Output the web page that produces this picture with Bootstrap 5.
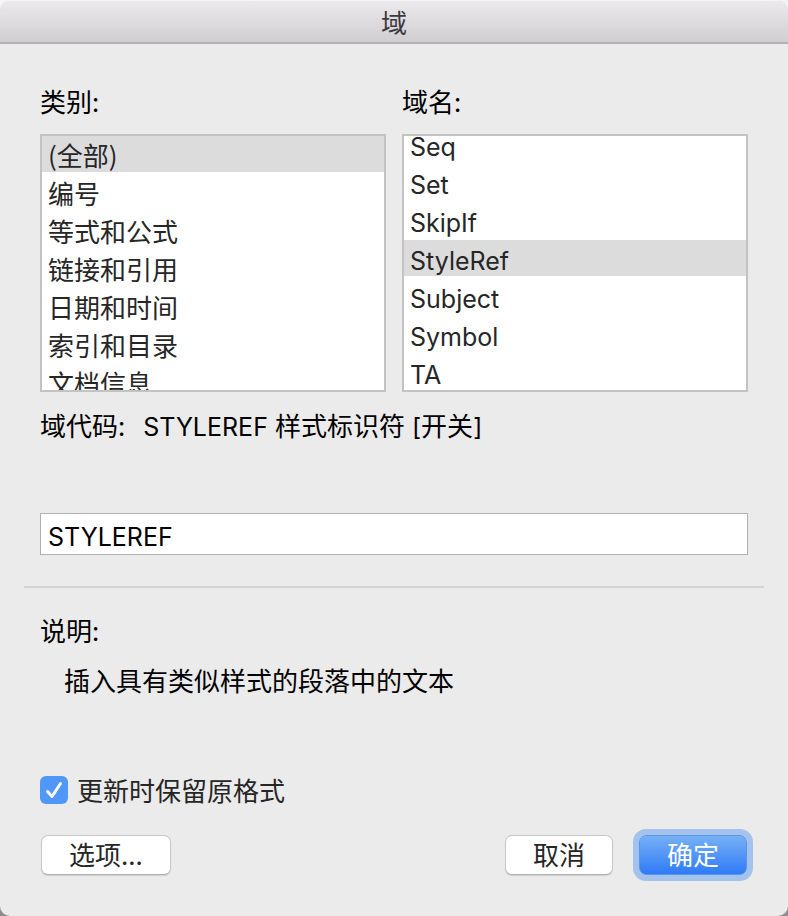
<!DOCTYPE html>
<html lang="zh-CN">
<head>
<meta charset="utf-8">
<meta name="viewport" content="width=device-width, initial-scale=1">
<title>域</title>
<link rel="stylesheet" href="https://cdn.jsdelivr.net/npm/bootstrap@5.3.0/dist/css/bootstrap.min.css">
<style>
  body {
    background: linear-gradient(#f6f6f6, #8c8c8c);
    color: #000;
    font: 26px/36px "Noto Sans CJK SC", sans-serif;
  }
  .dialog { background: #ebebeb; border-radius: 10px; overflow: hidden; }
  .title-bar {
    height: 44px;
    background: linear-gradient(#ebe9ec, #d1ced2);
    border-top: 1px solid #f6f5f6;
    border-bottom: 2px solid #b3b1b3;
    color: #3c3a3d;
  }
  .title-bar h1 { font-size: 26px; line-height: 36px; font-weight: 400; }
  .dialog-body { padding: 39px 40px 0; }
  .latin { font-family: Inter, "Noto Sans CJK SC", sans-serif; font-size: 25px; }
  .lists { gap: 16px; }
  .pick-label { margin-bottom: 15px; }
  .pick-list {
    display: block;
    height: 258px;
    padding: 0;
    border: 2px solid #c3c3c3;
    border-radius: 0;
    background: #fff;
    color: #262626;
    overflow-y: scroll;
    scrollbar-width: none;
    outline: 0;
  }
  .pick-list::-webkit-scrollbar { display: none; }
  .pick-list option {
    height: 36px;
    min-height: 36px;
    margin-bottom: 2px;
    padding: 0 6px;
    line-height: 36px;
    color: #262626;
  }
  .pick-list.latin option { padding-top: 6px; }
  .pick-list option:checked { background: #dcdcdc linear-gradient(#dcdcdc, #dcdcdc); color: #262626; }
  .code-row { margin-top: 15px; gap: 18px; }
  .code-input {
    height: 42px;
    margin-top: 68px;
    padding: 5px 7px 0;
    border: 1px solid #b0b0b0;
    border-radius: 0;
    color: #000;
  }
  .rule { margin: 31px -16px 24px; border-top: 2px solid #d4d4d4; opacity: 1; }
  .description { margin: 14px 0 0; padding-left: 24px; }
  .keep { margin-top: 74px; gap: 9px; color: #262626; }
  .keep .form-check-input {
    width: 28px;
    height: 28px;
    margin: 0;
    border: 0;
    border-radius: 6px;
    background: #4f97f8 url("data:image/svg+xml,%3Csvg xmlns='http://www.w3.org/2000/svg' viewBox='0 0 28 28'%3E%3Cpath d='M7.5 15.5 12 20.5 20.5 7.5' fill='none' stroke='%23fff' stroke-width='3' stroke-linecap='round' stroke-linejoin='round'/%3E%3C/svg%3E") center / 28px no-repeat;
  }
  .actions { padding: 27px 1px 40px; gap: 26px; }
  .push {
    height: 40px;
    padding: 0 27px 2px;
    border: 1px solid #c8c8c8;
    border-bottom-color: #b0b0b0;
    border-radius: 7px;
    background: #fff;
    box-shadow: 0 1px 1px #0000001f;
    color: #262626;
    font-size: 26px;
    line-height: 36px;
  }
  .push-default {
    border-color: #5c96e2;
    background: linear-gradient(#77b0f5, #2f7bf8);
    box-shadow: 0 0 0 6px #a3c3ee;
    color: #fff;
  }
</style>
</head>
<body>
<main class="dialog min-vh-100">
  <header class="title-bar d-flex align-items-center justify-content-center">
    <h1 class="m-0">域</h1>
  </header>
  <form class="dialog-body">
    <div class="lists d-flex">
      <div class="flex-fill w-50">
        <label class="pick-label d-block" for="category">类别:</label>
        <select class="pick-list w-100" id="category" size="7">
          <option selected>(全部)</option>
          <option>编号</option>
          <option>等式和公式</option>
          <option>链接和引用</option>
          <option>日期和时间</option>
          <option>索引和目录</option>
          <option>文档信息</option>
        </select>
      </div>
      <div class="flex-fill w-50">
        <label class="pick-label d-block" for="field">域名:</label>
        <select class="pick-list latin w-100" id="field" size="7">
          <option>Seq</option>
          <option>Set</option>
          <option>SkipIf</option>
          <option selected>StyleRef</option>
          <option>Subject</option>
          <option>Symbol</option>
          <option>TA</option>
        </select>
      </div>
    </div>
    <div class="code-row d-flex">
      <label for="code">域代码:</label>
      <span><span class="latin">STYLEREF </span>样式标识符<span class="latin"> [</span>开关<span class="latin">]</span></span>
    </div>
    <input class="code-input latin form-control shadow-none" id="code" type="text" value="STYLEREF">
    <hr class="rule">
    <div>说明:</div>
    <p class="description">插入具有类似样式的段落中的文本</p>
    <div class="keep d-flex align-items-center">
      <input class="form-check-input flex-shrink-0" type="checkbox" id="keep" checked>
      <label for="keep">更新时保留原格式</label>
    </div>
    <div class="actions d-flex">
      <button class="push btn me-auto" type="button">选项...</button>
      <button class="push btn" type="button">取消</button>
      <button class="push push-default btn" type="submit">确定</button>
    </div>
  </form>
</main>
<script src="https://cdn.jsdelivr.net/npm/bootstrap@5.3.0/dist/js/bootstrap.bundle.min.js"></script>
<script>
  // Open the field list scrolled down to its last entry.
  const field = document.getElementById('field');
  window.addEventListener('load', () => { field.scrollTop = 10; });
</script>
</body>
</html>
